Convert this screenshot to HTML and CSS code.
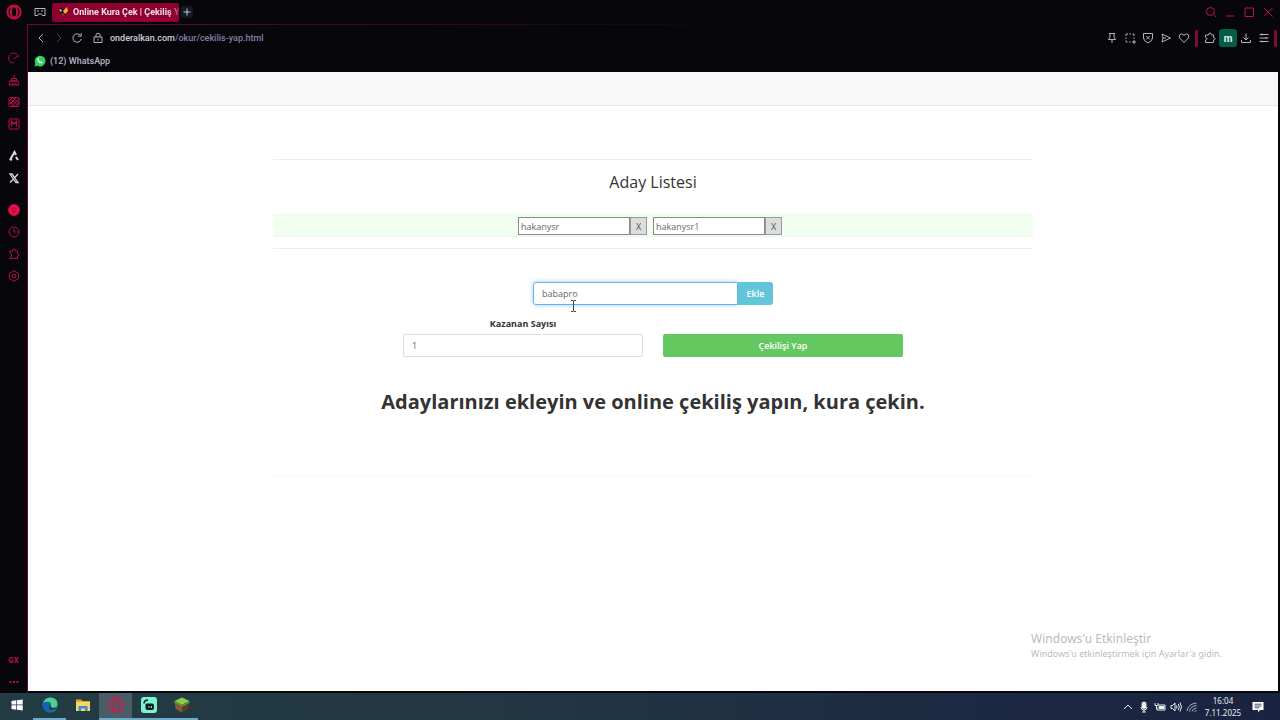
FILE: index.html
```html
<!DOCTYPE html>
<html lang="tr">
<head>
    <meta charset="utf-8">
    <title>Online Kura Çek | Çekiliş Yap</title>
    <link rel="stylesheet" href="styles.css">
</head>
<body>
    <!-- sekmeler -->
    <header class="tabbar">
        <button class="opera" aria-label="Menü"><svg viewBox="0 0 16 16"><circle cx="8" cy="8" r="6.6"/><ellipse cx="8" cy="8" rx="3.2" ry="5.4"/></svg></button>
        <button class="gx" aria-label="GX Corner"><svg viewBox="0 0 12 12"><path d="M1 9.5v-7h10v7H8.5L7.5 8h-3l-1 1.500z"/><path d="M3 5h2M7 5h2"/></svg></button>
        <a class="tab" href="#">
            <svg viewBox="0 0 12 12"><path d="M1 2l6 1 1 5-2 3-2-4z" fill="#1b1013"/><path d="M6 5l4-4 1 4-3 3z" fill="#f3b13c"/><path d="M2 3l3 1-1 2z" fill="#e9e2e4"/><path d="M5 8l2-1-1 4z" fill="#d8452f"/></svg>
            <span>Online Kura Çek | Çekiliş Y</span>
        </a>
        <button class="new-tab" aria-label="Yeni sekme"><svg viewBox="0 0 12 12"><path d="M6 2.500v7M2.500 6h7"/></svg></button>
        <div class="window-buttons">
            <button aria-label="Ara"><svg viewBox="0 0 12 12"><circle cx="5.500" cy="5.500" r="4"/><path d="M8.500 8.500L11 11"/></svg></button>
            <button aria-label="Küçült"><svg viewBox="0 0 12 12"><path d="M2 10h8"/></svg></button>
            <button aria-label="Büyüt"><svg viewBox="0 0 12 12"><path d="M2 2h8.500v8.500H2z"/></svg></button>
            <button aria-label="Kapat"><svg viewBox="0 0 12 12"><path d="M2 2l8.500 8.500M10.500 2L2 10.500"/></svg></button>
        </div>
    </header>

    <div class="window">
        <!-- yan menü -->
        <nav class="sidebar">
            <div class="group">
                <button aria-label="GX Control"><svg viewBox="0 0 12 12"><path d="M4 10.800A5 5 0 1 1 10.500 5M6 7l4.500-3.500M4 10.800h2"/></svg></button>
                <button aria-label="GX Cleaner"><svg viewBox="0 0 12 12"><path d="M6 1v3.500M3.500 4.500h5v2.500h-5zM2 7h8l1 4H1zM4 9v2M6 9v2M8 9v2"/></svg></button>
                <button aria-label="GX Mods"><svg viewBox="0 0 12 12"><rect x="1" y="1.500" width="10" height="9" rx="1"/><path d="M1 5l3.500-3.500M1 9l7.500-7.500M3 10.500l8-8M7 10.500l4-4M2 3l8 6M5 2l6 5M2 6l5 4"/></svg></button>
                <button aria-label="Mods"><svg viewBox="0 0 12 12"><rect x="1" y="1" width="10" height="10" rx="1"/><path d="M3.500 8.500v-5L6 6l2.500-2.500v5" stroke-width="1.400"/></svg></button>
            </div>
            <div class="group light">
                <button aria-label="Aria"><svg viewBox="0 0 12 12"><path d="M2 10l4.500-8L8 5M8 7l2 3M2 10l2-1" stroke-width="2"/></svg></button>
                <button aria-label="X"><svg viewBox="0 0 12 12"><path d="M2 2h2l6 8.500H8zM10 2L7 5.200M5 7.500L2 10.500" stroke-width="1.300"/></svg></button>
            </div>
            <div class="group">
                <button aria-label="Müzik"><svg viewBox="0 0 12 12"><circle cx="6" cy="6" r="5.500" fill="#f0124f"/><path d="M3 4.500q3-1.500 6 0M3.500 6.500q2.500-1 5 0M4 8.300q2-.8 4 0" stroke="#9a0b38"/></svg></button>
                <button aria-label="Geçmiş"><svg viewBox="0 0 12 12"><circle cx="6" cy="6" r="5"/><path d="M6 2.500V6h2.500"/></svg></button>
                <button aria-label="Uzantılar"><svg viewBox="0 0 12 12"><path d="M1.500 3h3q0-2 1.500-2t1.500 2h2v2.500q1.500 0 1.500 1.300T9.500 8v2.500h-8l2-1.500V6.500z"/></svg></button>
                <button aria-label="Ayarlar"><svg viewBox="0 0 12 12"><path d="M6 .7l4.600 2.600v5.400L6 11.300 1.400 8.700V3.300z"/><circle cx="6" cy="6" r="1.800"/></svg></button>
            </div>
            <div class="group bottom">
                <button class="label">GX</button>
                <button aria-label="Daha fazla"><svg viewBox="0 0 12 12"><path d="M1.500 6h2M5 6h2M8.500 6h2" stroke-width="2"/></svg></button>
            </div>
        </nav>

        <div class="view">
            <!-- adres çubuğu -->
            <div class="toolbar">
                <button aria-label="Geri"><svg viewBox="0 0 12 12"><path d="M8 2L4 6l4 4"/></svg></button>
                <button class="off" aria-label="İleri"><svg viewBox="0 0 12 12"><path d="M4 2l4 4-4 4"/></svg></button>
                <button aria-label="Yenile"><svg viewBox="0 0 12 12"><path d="M9.500 3.500A4.200 4.200 0 1 0 10.200 7M10.200 1v3.200H7"/></svg></button>
                <button class="lock" aria-label="Site bilgisi"><svg viewBox="0 0 12 12"><path d="M2 5h8v5.500H2zM4 5V3q0-1.700 2-1.700T8 3v2M6 7v1.500"/></svg></button>
                <a class="url" href="#">onderalkan.com<span>/okur/cekilis-yap.html</span></a>
                <div class="actions">
                    <button aria-label="Sabitle"><svg viewBox="0 0 12 12"><path d="M3 1.500h6M4 1.500v3.500L2.500 7.500h7L8 5V1.500M6 7.500V11"/></svg></button>
                    <button aria-label="Ekran görüntüsü"><svg viewBox="0 0 12 12"><path d="M2 4V2h2M5.500 2h1.500M8.500 2H10v2M10 5.500V7M2 5.500V7M2 8.500V10h1.500M5 10h1.500M10 8v4M8 10h4"/></svg></button>
                    <button aria-label="Reklam engelleyici"><svg viewBox="0 0 12 12"><path d="M1.500 1.500h9V6q0 3-4.500 5Q1.500 9 1.500 6zM4.300 4l3.400 3.400M7.700 4L4.300 7.400"/></svg></button>
                    <button aria-label="Gönder"><svg viewBox="0 0 12 12"><path d="M2 2l8.500 4L2 10l1-4zM3 6h3"/></svg></button>
                    <button aria-label="Favori"><svg viewBox="0 0 12 12"><path d="M6 10.500L1.700 6Q.5 4 2 2.500T6 3.200Q8.500 1 10 2.500T10.300 6z"/></svg></button>
                    <i class="divider"></i>
                    <button aria-label="Uzantılar"><svg viewBox="0 0 12 12"><path d="M1.500 3h3q0-2 1.500-2t1.500 2h2v2.500q1.500 0 1.500 1.300T9.500 8v2.500h-8V8q1.500 0 1.500-1.200T1.500 5.500z"/></svg></button>
                    <button class="profile">m</button>
                    <button aria-label="İndirilenler"><svg viewBox="0 0 12 12"><path d="M6 1.500V8M3.500 5.500L6 8l2.500-2.500M1.500 8v2.500h9V8"/></svg></button>
                    <button aria-label="Kolay kurulum"><svg viewBox="0 0 12 12"><path d="M1.500 2.500h9M1.500 6h9M1.500 9.500h9M4 1.500v2M8 5v2M4 8.500v2"/></svg></button>
                    <i class="divider"></i>
                </div>
            </div>
            <div class="bookmarks">
                <a href="#">
                    <svg viewBox="0 0 12 12"><path d="M.5 11.500l.8-3A5.400 5.400 0 1 1 3.500 10.800z" fill="#2fd35c"/><path d="M3.700 3.300q.8-.8 1.200.3l.2.800-.5.600q.6 1.300 2 1.900l.7-.6 1.300.700q0 1.500-1.600 1.500-3.600-.8-3.600-4.400z" fill="#fff"/></svg>
                    (12) WhatsApp
                </a>
            </div>

            <!-- sayfa -->
            <main class="page">
                <div class="navbar"></div>
                <div class="container">
                    <hr>
                    <h4>Aday Listesi</h4>
                    <div class="list">
                        <div class="item">
                            <input type="text" value="hakanysr" aria-label="Aday 1"><button>X</button>
                        </div>
                        <div class="item">
                            <input type="text" value="hakanysr1" aria-label="Aday 2"><button>X</button>
                        </div>
                    </div>
                    <hr>
                    <form class="add">
                        <input type="text" value="babapro" aria-label="Aday adı"><button type="button">Ekle</button>
                        <svg class="cursor" viewBox="0 0 7 12"><path d="M1 .5h2l.5.500.5-.5h2M3.500 1v10M1 11.500h2l.5-.5.5.500h2"/></svg>
                    </form>
                    <form class="draw">
                        <div class="field">
                            <label for="count">Kazanan Sayısı</label>
                            <input type="text" id="count" value="1">
                        </div>
                        <button type="button">Çekilişi Yap</button>
                    </form>
                    <h1>Adaylarınızı ekleyin ve online çekiliş yapın, kura çekin.</h1>
                    <hr class="last">
                </div>
                <div class="watermark">
                    <p class="big">Windows'u Etkinleştir</p>
                    <p>Windows'u etkinleştirmek için Ayarlar'a gidin.</p>
                </div>
            </main>
        </div>
    </div>

    <!-- görev çubuğu -->
    <footer class="taskbar">
        <button aria-label="Başlat"><svg viewBox="0 0 12 12" fill="#fff"><path d="M.5 2L5.300 1.300v4.300H.5zM6 1.200L11.700.4v5.200H6zM.5 6.300h4.800v4.400L.5 10zM6 6.300h5.700v5.300L6 10.800z"/></svg></button>
        <button class="open" aria-label="Edge"><svg class="app" viewBox="0 0 16 16"><circle cx="8" cy="8" r="7.500" fill="#1588cf"/><path d="M1 6.500Q2.500.5 8.500.5q7 .5 7 6.500 0 3.500-4 3.500-3 0-2.500-2Q9 5 5.500 5 2.500 5 1 6.500z" fill="#4fd088"/><path d="M.6 8Q1 4.500 5.500 4.800 9.200 5 9 8q-3 .5-2.500 3 .8 3 4.500 3-2.500 2-6 1Q.8 13 .6 8z" fill="#1263b5"/><path d="M9 8q-1 2.500 2.500 3 2 0 3.500-1-1 3-4 3.500Q6.500 13 6.600 10.200 7 8.200 9 8z" fill="#274048"/></svg></button>
        <button aria-label="Dosya Gezgini"><svg class="app" viewBox="0 0 16 16"><path d="M1 2.500h5l1.500 1.500H15v3H1z" fill="#e3a72f"/><path d="M1 5h14v9H1z" fill="#f9d568"/><path d="M3.500 14V9h9v5h-2.500v-2.500H6V14z" fill="#3a8fd0"/></svg></button>
        <button class="open active" aria-label="Opera GX"><svg class="app" viewBox="0 0 16 16" fill="none" stroke="#c51f4b" stroke-width="1.500"><circle cx="8" cy="8" r="7"/><ellipse cx="8" cy="8" rx="3.500" ry="5.800"/></svg></button>
        <button class="open" aria-label="Streamlabs"><svg class="app" viewBox="0 0 16 16"><rect width="16" height="16" rx="3" fill="#7df3cf"/><path d="M4.500 7.500q0-1 1.500-1h5q2 0 2 2v2.500q0 2-2 2H6.500q-2 0-2-2z" fill="#0b1d20"/><path d="M3 6.500Q3.300 3 7 3" fill="none" stroke="#0b1d20" stroke-width="1.500"/><path d="M8 9v2M10.500 9v2" stroke="#7df3cf"/></svg></button>
        <button class="open" aria-label="Minecraft"><svg class="app" viewBox="0 0 16 16"><path d="M8 .5L15.500 4 8 8 .5 4z" fill="#8bcf4c"/><path d="M.5 4L8 8v7.500L1.500 12z" fill="#855a3b"/><path d="M15.500 4L8 8v7.500l6.500-3.500z" fill="#5b3b29"/><path d="M.5 4L8 8l7.500-4v2L13 7 11 8.500 8 9.500l-3-1.500L3 7 .5 6z" fill="#57a02f"/></svg></button>
        <div class="tray">
            <svg viewBox="0 0 12 12"><path d="M2 8l4-4 4 4"/></svg>
            <svg viewBox="0 0 12 12"><rect x="4" y="1" width="4" height="6.500" rx="2" fill="#fff"/><path d="M3 6q0 3 3 3t3-3M6 9v2M4 11h4"/></svg>
            <svg viewBox="0 0 12 12"><path d="M4 4h7v5H3V6.500M1 2v2.500h3V2M2.500 4.500V8"/><path d="M5 5.500h5v2H5z" fill="#fff"/></svg>
            <svg viewBox="0 0 12 12"><path d="M1 4.500h1.500L5 2v8L2.500 7.500H1zM6.500 4.500q1 1.500 0 3M8.300 3q2 3 0 6M10 1.500q3 4.500 0 9"/></svg>
            <svg class="wifi" viewBox="0 0 12 12"><path d="M1 10Q2 3 10.500 2M3.500 10.500Q4 5.500 10.500 4.500M6 10.500Q6.500 7.500 10.500 7M8.500 10.500l2-1"/></svg>
            <div class="clock"><span>16:04</span><span>7.11.2025</span></div>
            <svg class="notify" viewBox="0 0 12 12"><path d="M.5 1h11v8H8L6 11.500V9H.5z" fill="#fff"/><path d="M2.500 3.200h7M2.500 5h7M2.500 6.800h5" stroke="#1c2942" stroke-width=".8"/></svg>
        </div>
    </footer>
</body>
</html>
```
FILE: styles.css
```css
*{
    box-sizing: border-box;
    margin: 0;
    padding: 0;
}
body{
    display: flex;
    flex-direction: column;
    height: 100vh;
    overflow: hidden;
    background-color: #06060b;
    font-family: "Open Sans", sans-serif;
    font-size: 9px;
    color: #333;
}
button{
    display: flex;
    align-items: center;
    justify-content: center;
    border: none;
    background: none;
    font-family: inherit;
    font-size: inherit;
    color: inherit;
}
a{
    color: inherit;
    text-decoration: none;
}
svg{
    flex: none;
    width: 12px;
    height: 12px;
}
/* sekmeler */
.tabbar{
    display: flex;
    align-items: center;
    height: 24px;
    font-family: Roboto, sans-serif;
}
.tabbar svg, .sidebar svg, .toolbar svg, .tray svg{
    fill: none;
    stroke: currentColor;
}
.opera{
    width: 28px;
    color: #c4123f;
}
.tabbar .opera svg{
    width: 16px;
    height: 16px;
    stroke-width: 2;
}
.gx{
    width: 24px;
    color: #b9b6c0;
}
.tab{
    display: flex;
    align-items: center;
    gap: 4px;
    width: 127px;
    height: 19px;
    padding: 0 4px 0 5px;
    border-radius: 2px;
    background-color: #8f0030;
    color: #f1dfe6;
    font-weight: 700;
}
.tabbar .tab svg{
    stroke: none;
}
.tab span{
    white-space: nowrap;
    mask-image: linear-gradient(to right, #000 90%, rgba(0, 0, 0, .2));
}
.new-tab{
    width: 12px;
    height: 12px;
    margin-left: 2px;
    border-radius: 2px;
    background-color: #151722;
    color: #c4c8d4;
}
.window-buttons{
    display: flex;
    gap: 7px;
    margin-left: auto;
    padding-right: 6px;
    color: #c4123f;
}
/* pencere */
.window{
    display: flex;
    flex: 1;
    min-height: 0;
}
.sidebar{
    display: flex;
    flex-direction: column;
    gap: 10px;
    width: 27px;
    padding-top: 23px;
    color: #b80f42;
}
.sidebar button{
    width: 27px;
    height: 22px;
}
.sidebar .light{
    color: #dcdce0;
}
.sidebar .bottom{
    margin-top: auto;
}
.sidebar .label{
    font-family: Inter, sans-serif;
    font-size: 7px;
    font-weight: 800;
}
.view{
    display: flex;
    flex-direction: column;
    flex: 1;
    min-width: 0;
    padding-right: 2px;
    padding-bottom: 2px;
    border-top: 1px solid;
    border-left: 1px solid;
    border-image: linear-gradient(to right, #6d0a2b, #06060b 60%) 1;
    font-family: Roboto, sans-serif;
}
.toolbar{
    display: flex;
    align-items: center;
    height: 26px;
    padding-left: 4px;
    color: #b4b1bc;
}
.toolbar button{
    width: 18px;
    height: 18px;
}
.toolbar .off{
    color: #45434e;
}
.toolbar .lock{
    margin: 0 3px;
}
.url{
    font-weight: 500;
    color: #d0cddb;
}
.url span{
    color: #8580a5;
}
.actions{
    display: flex;
    align-items: center;
    margin-left: auto;
}
.divider{
    width: 3px;
    height: 17px;
    margin: 0 3px 0 2px;
    border-radius: 1px;
    background-color: #82073a;
}
.actions .divider:last-child{
    margin: 0 1px;
}
.toolbar .profile{
    border-radius: 3px;
    background-color: #075c46;
    color: #e5f3ee;
    font-size: 10px;
    font-weight: 700;
}
.bookmarks{
    display: flex;
    align-items: center;
    height: 21px;
    padding-left: 6px;
    padding-bottom: 2px;
    font-weight: 500;
    color: #b9b6c2;
}
.bookmarks a{
    display: flex;
    align-items: center;
    gap: 4px;
}
/* sayfa */
.page{
    position: relative;
    flex: 1;
    background-color: #fff;
    font-family: "Open Sans", sans-serif;
}
.navbar{
    height: 34px;
    background-color: #f8f8f8;
    border-bottom: 1px solid #e7e7e7;
}
.container{
    width: 61%;
    max-width: 760px;
    margin: 0 auto;
    padding-top: 53px;
    text-align: center;
}
hr{
    border: none;
    border-top: 1px solid #eee;
}
h4{
    margin: 10px 0 19px;
    font-weight: 400;
    font-size: 16px;
    line-height: 24px;
}
.list{
    display: flex;
    justify-content: center;
    gap: 6px;
    height: 23px;
    margin-bottom: 12px;
    padding: 4px 6px 0 0;
    border-radius: 3px;
    background-color: #f0fff0;
    box-shadow: 0 1px 1px rgba(0, 0, 0, .06);
}
.item{
    display: flex;
    height: 18px;
}
input{
    min-width: 0;
    font-family: inherit;
    font-size: inherit;
    color: #666;
    outline: none;
}
.item input{
    width: 112px;
    padding: 0 2px;
    border: 1px solid #888;
    background-color: #fff;
}
.item button{
    width: 17px;
    border: 1px solid #999;
    background-color: #ddd;
    color: #555;
}
.add{
    position: relative;
    display: flex;
    width: 240px;
    height: 23px;
    margin: 33px auto 12px;
}
.add input{
    flex: 1;
    padding: 0 8px;
    border: 1px solid #66afe9;
    border-radius: 3px 0 0 3px;
    box-shadow: 0 0 5px rgba(102, 175, 233, .6);
}
.add button{
    width: 35px;
    border-radius: 0 3px 3px 0;
    background-color: #63c5da;
    color: #fff;
    font-weight: 600;
}
.cursor{
    position: absolute;
    left: 37px;
    top: 18px;
    width: 7px;
    height: 12px;
    fill: none;
    stroke: #444;
}
.draw{
    display: flex;
    align-items: flex-end;
    justify-content: center;
    gap: 20px;
}
.field{
    display: flex;
    flex-direction: column;
    width: 240px;
}
.field label{
    margin-bottom: 3px;
    font-weight: 700;
    line-height: 14px;
}
.field input{
    height: 23px;
    padding: 0 8px;
    border: 1px solid #ddd;
    border-radius: 2px;
}
.draw button{
    width: 240px;
    height: 23px;
    border-radius: 2px;
    background-color: #62c85f;
    color: #fff;
    font-weight: 600;
}
h1{
    margin: 31px 0 59px;
    font-weight: 700;
    font-size: 20px;
    line-height: 28px;
}
hr.last{
    border-color: #f8f8f8;
}
.watermark{
    position: absolute;
    right: 56px;
    bottom: 30px;
    font-family: "Noto Sans", sans-serif;
    line-height: 14px;
    color: #bbb;
}
.watermark .big{
    font-size: 12px;
    line-height: 17px;
}
/* görev çubuğu */
.taskbar{
    display: flex;
    height: 27px;
    background: linear-gradient(to right, #233b43, #223944 35%, #1c2942 75%, #1a2340);
    color: #e8edf2;
    font-family: "Noto Sans", sans-serif;
}
.taskbar button{
    width: 33px;
    padding-bottom: 1px;
    border-bottom: 2px solid transparent;
}
.taskbar .app{
    width: 16px;
    height: 16px;
}
.taskbar .open{
    border-bottom-color: #6fa9c9;
}
.taskbar .active{
    background-color: #4a5d65;
}
.tray{
    display: flex;
    align-items: center;
    gap: 4px;
    margin-left: auto;
    padding-right: 16px;
}
.tray .wifi{
    opacity: .7;
}
.clock{
    display: flex;
    flex-direction: column;
    align-items: center;
    width: 42px;
    font-size: 8px;
    line-height: 12px;
}
.tray .notify{
    margin-left: 4px;
    stroke: none;
}
```
